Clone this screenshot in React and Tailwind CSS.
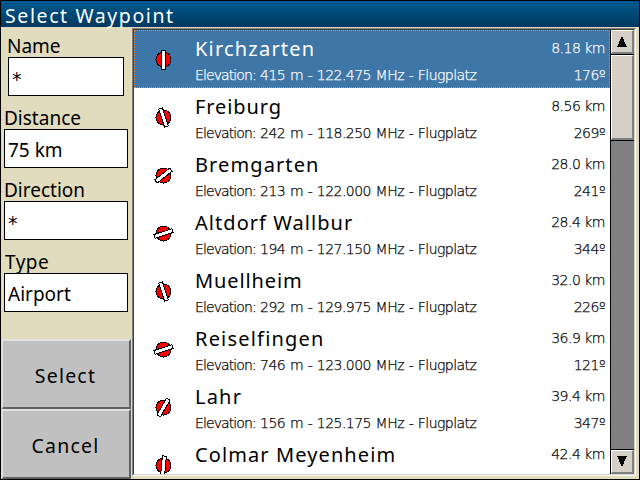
import React from "react";

const rows = [
  ["Kirchzarten", "8.18 km", "415 m - 122.475", "176º", 0, "tracking-[1.2px]"],
  ["Freiburg", "8.56 km", "242 m - 118.250", "269º", -18, "tracking-[0.9px]"],
  ["Bremgarten", "28.0 km", "213 m - 122.000", "241º", 52, "tracking-[1.1px]"],
  ["Altdorf Wallbur", "28.4 km", "194 m - 127.150", "344º", 72, "tracking-[1.05px]"],
  ["Muellheim", "32.0 km", "292 m - 129.975", "226º", -18, "tracking-[0.9px]"],
  ["Reiselfingen", "36.9 km", "746 m - 123.000", "121º", 72, "tracking-[1.2px]"],
  ["Lahr", "39.4 km", "156 m - 125.175", "347º", 30, "tracking-[1.2px]"],
  ["Colmar Meyenheim", "42.4 km", "", "", 5, "tracking-[1.1px]"],
];

function Airfield({ angle }) {
  return (
    <svg className="mt-[18px] ml-[18px] h-[22px] w-[22px] shrink-0" viewBox="-11 -11 22 22" shapeRendering="crispEdges">
      <circle cx="-0.5" cy="-0.5" r="7.5" fill="#f00" stroke="#000" />
      <rect x="-2" y="-9.5" width="4" height="19" fill="#fff" stroke="#000" transform={`translate(-.5 -.5) rotate(${angle})`} />
    </svg>
  );
}

function Field({ label, value, labelClass, boxClass }) {
  return (
    <div className="h-[72px]">
      <div className={`h-[23px] text-[19px] leading-[25px] ${labelClass}`}>{label}</div>
      <div className={`h-[39px] border border-black bg-white pl-[3px] text-[19px] leading-[41px] ${boxClass}`}>{value}</div>
    </div>
  );
}

function Button({ children }) {
  return (
    <button className="block h-[70px] w-[129px] border-t-2 border-r-2 border-b-2 border-l border-t-[#e2e2e2] border-r-[#606060] border-b-[#606060] border-l-[#e2e2e2] bg-[#c0c0c0] pt-1 pr-px text-[19.5px] tracking-[1.2px]">
      {children}
    </button>
  );
}

function Arrow({ down }) {
  return (
    <div className="flex h-6 w-[23px] items-center justify-center border-t border-r-2 border-b-2 border-l border-t-white border-r-[#808080] border-b-[#808080] border-l-white bg-[#d4d0c8]">
      <svg className="h-[11px] w-[10px]" viewBox="0 0 10 11" shapeRendering="crispEdges">
        <path d={down ? "M0 0H10L5 11Z" : "M0 11H10L5 0Z"} />
      </svg>
    </div>
  );
}

export default function App() {
  return (
    <div className="flex h-[480px] w-[640px] flex-col overflow-hidden border border-black bg-[#e2dcbe] font-['Noto_Sans','Open_Sans',sans-serif] text-black">
      <header className="h-[26px] shrink-0 bg-linear-to-b from-[#005a91] to-[#00385e] pl-1 text-[19.5px] leading-[30px] tracking-[1.6px] whitespace-nowrap text-white">Select Waypoint</header>
      <div className="flex min-h-0 flex-1">
        <aside className="flex w-[131px] shrink-0 flex-col pt-[7px]">
          <Field label="Name" value="*" labelClass="pl-[6px]" boxClass="ml-[7px] w-[116px] pt-px font-['DejaVu_Sans']" />
          <Field label="Distance" value="75 km" labelClass="pl-[3px]" boxClass="ml-[3px] w-[124px]" />
          <Field label="Direction" value="*" labelClass="pl-[3px]" boxClass="ml-[3px] w-[124px] pt-px font-['DejaVu_Sans']" />
          <Field label="Type" value="Airport" labelClass="pl-[4px] tracking-[0.5px]" boxClass="ml-[3px] w-[124px]" />
          <div className="mt-[17px] pl-px">
            <Button>Select</Button>
            <Button>Cancel</Button>
          </div>
        </aside>
        <main className="mt-px h-[448px] w-[504px] border border-t-[#808080] border-r-white border-b-white border-l-[#808080]">
          <div className="flex h-full overflow-hidden border border-t-[#404040] border-r-[#d4d0c8] border-b-[#d4d0c8] border-l-[#404040] bg-white">
            <div className="w-[476px] shrink-0 overflow-hidden">
              {rows.map(([name, distance, detail, bearing, angle, tracking], i) => (
                <div key={name} className={`flex h-[58px] ${i === 0 ? "border border-dotted border-[#e08a3c] bg-[#3f76a8] bg-clip-border text-white" : "border border-transparent"}`}>
                  <Airfield angle={angle} />
                  <div className="ml-[20px] flex-1 whitespace-nowrap">
                    <div className={`mt-[5px] h-[26px] text-[20px] leading-[26px] ${tracking}`}>{name}</div>
                    {detail && (
                      <div className="h-[24px] font-['DejaVu_Sans'] text-[14px] leading-[26px] font-extralight tracking-[-0.55px] [word-spacing:0.8px] [-webkit-text-stroke:0.25px]">
                        <span className="tracking-[-0.9px]">Elevation: </span>
                        {detail} MHz - Flugplatz
                      </div>
                    )}
                  </div>
                  <div className="mr-[4px] pt-[4px] text-right font-['DejaVu_Sans'] text-[14px] leading-[27px] font-extralight tracking-[-0.5px] [-webkit-text-stroke:0.25px]">
                    <div>{distance}</div>
                    <div>{bearing}</div>
                  </div>
                </div>
              ))}
            </div>
            <div className="flex w-6 shrink-0 flex-col border-l border-black bg-[#808080]">
              <Arrow />
              <div className="h-[87px] w-[23px] border-y border-black">
                <div className="h-full border-t border-r-2 border-b-2 border-l border-t-white border-r-[#808080] border-b-[#808080] border-l-white bg-[#d4d0c8]" />
              </div>
              <div className="flex-1" />
              <div className="border-t border-black"><Arrow down /></div>
            </div>
          </div>
        </main>
      </div>
    </div>
  );
}
